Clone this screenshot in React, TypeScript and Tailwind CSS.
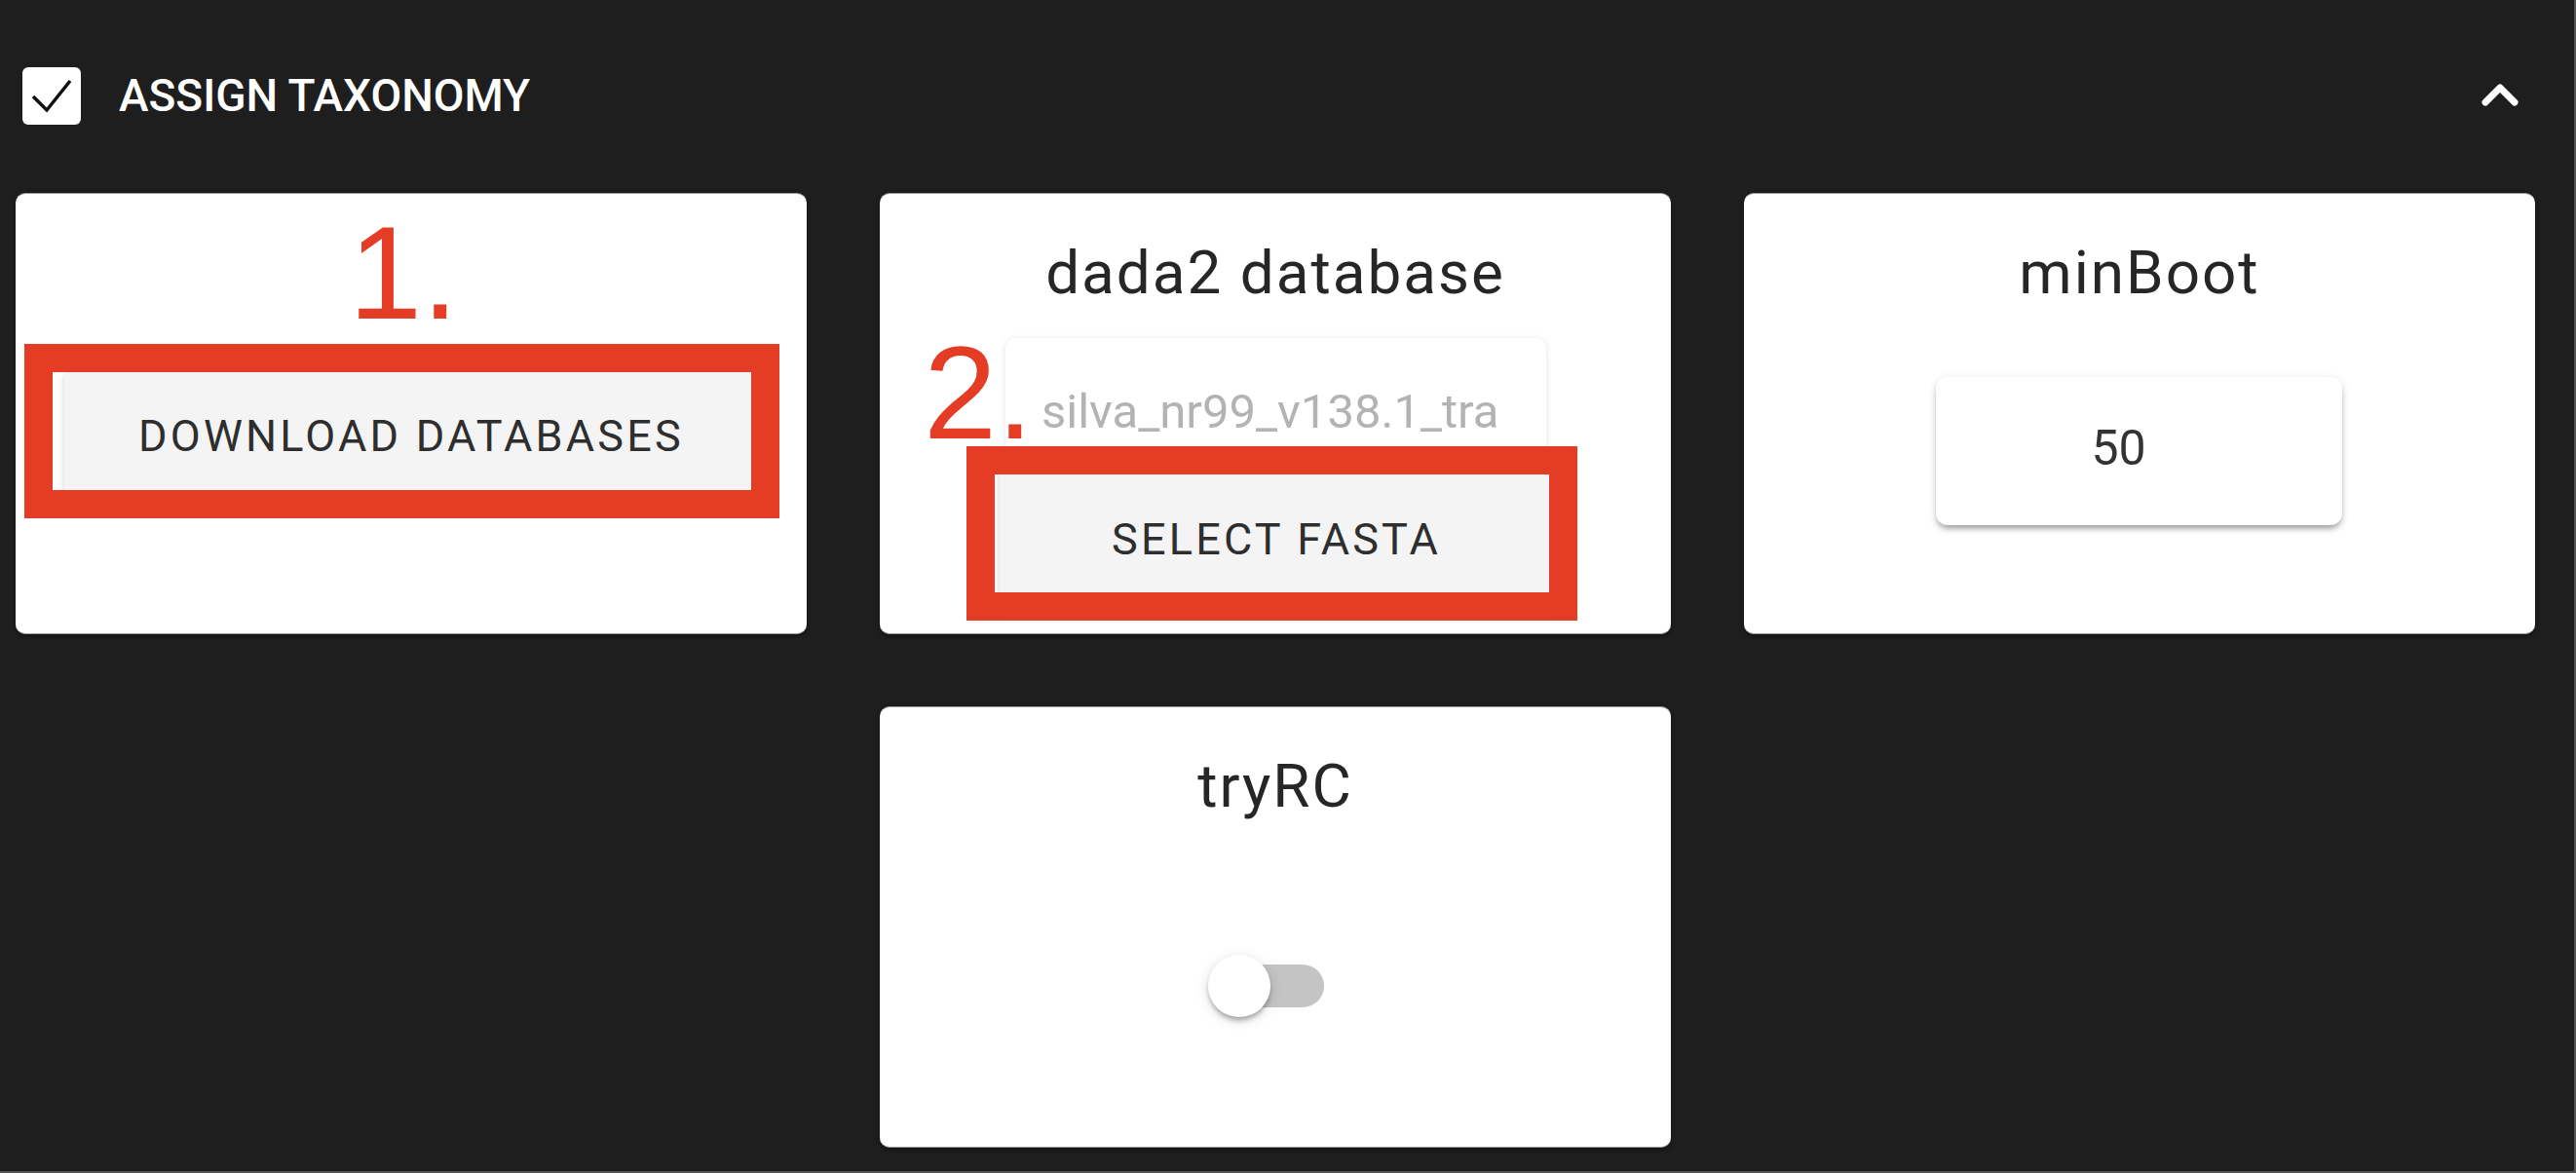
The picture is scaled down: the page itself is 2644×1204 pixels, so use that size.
import React from "react";

function Card({ className = "", children }: { className?: string; children?: React.ReactNode }) {
  return (
    <div
      className={
        "relative h-[453px] bg-white rounded-[10px] border-t border-b border-[#9a9a9a] shadow-[0_2px_4px_rgba(0,0,0,0.4)] " +
        className
      }
    >
      {children}
    </div>
  );
}

function Title({ children }: { children: React.ReactNode }) {
  return (
    <div className="pt-[50px] text-center text-[62px] font-normal leading-none tracking-[2px] text-[#262626]">
      {children}
    </div>
  );
}

function RedBox({ className }: { className: string }) {
  return <div className={"absolute border-[29px] border-[#e43c25] " + className} />;
}

export default function App() {
  return (
    <div className="w-[2644px] h-[1204px] bg-[#1e1e1e] overflow-hidden border-r-2 border-b-2 border-[#555555] font-['Roboto',sans-serif]">
      <header className="h-[196px] flex items-center pl-[23px] pr-[54px]">
        <div className="w-[60px] h-[59px] bg-white rounded-[6px] shrink-0">
          <svg width="60" height="59" viewBox="0 0 60 59">
            <polyline points="11,30 25,44 49,14" fill="none" stroke="#111111" strokeWidth="3.5" />
          </svg>
        </div>
        <span className="ml-[39px] text-white text-[46px] font-medium leading-none">ASSIGN TAXONOMY</span>
        <div className="flex-1" />
        <svg width="44" height="32" viewBox="0 0 44 32" className="shrink-0">
          <polyline
            points="7,23 22,8 37,23"
            fill="none"
            stroke="#ffffff"
            strokeWidth="7"
            strokeLinecap="round"
            strokeLinejoin="round"
          />
        </svg>
      </header>

      <div className="mt-[2px] pl-[16px] grid grid-cols-[812px_812px_812px] grid-rows-[453px_453px] gap-x-[75px] gap-y-[74px]">
        {/* Card 1 */}
        <Card>
          <div className="absolute left-[342px] top-[14px] text-[135px] leading-none text-[#e43c25] font-['Liberation_Sans',Arial,sans-serif]">
            1.
          </div>
          <div className="pt-[181px] pl-[50px]">
            <div className="w-[712px] h-[135px] bg-[#f4f4f4] rounded-[6px] shadow-[0_3px_6px_rgba(0,0,0,0.2)] flex items-center justify-center text-[45px] font-normal leading-none tracking-[3.2px] text-[#2e2e2e]">
              DOWNLOAD DATABASES
            </div>
          </div>
          <RedBox className="left-[9px] top-[154px] w-[775px] h-[179px]" />
        </Card>

        {/* Card 2 */}
        <Card>
          <Title>dada2 database</Title>
          <div className="mt-[36px] ml-[129px] w-[555px] h-[130px] bg-white rounded-[10px] shadow-[0_1px_6px_rgba(0,0,0,0.12)] pt-[51px] pl-[37px]">
            <div className="w-[472px] overflow-hidden whitespace-nowrap text-[49px] leading-none text-[#b3b3b3]">
              silva_nr99_v138.1_train_set.fa.gz
            </div>
          </div>
          <div className="ml-[123px] w-[568px] h-[153px] bg-[#f4f4f4] rounded-[6px] shadow-[0_3px_6px_rgba(0,0,0,0.2)] flex items-center justify-center text-[45px] font-normal leading-none tracking-[3.2px] text-[#2e2e2e]">
            SELECT FASTA
          </div>
          <div className="absolute left-[45px] top-[137px] text-[135px] leading-none text-[#e43c25] font-['Liberation_Sans',Arial,sans-serif]">
            2.
          </div>
          <RedBox className="left-[89px] top-[259px] w-[627px] h-[179px]" />
        </Card>

        {/* Card 3 */}
        <Card>
          <Title>minBoot</Title>
          <div className="mt-[76px] ml-[197px] w-[417px] h-[152px] bg-white rounded-[12px] shadow-[0_5px_6px_-2px_rgba(0,0,0,0.35),0_2px_10px_rgba(0,0,0,0.12)] pt-[48px] pr-[42px] text-center text-[50px] leading-none text-[#333333]">
            50
          </div>
        </Card>

        {/* Card 4 */}
        <Card className="col-start-2">
          <Title>tryRC</Title>
          <div className="relative mt-[142px] ml-[337px] w-[120px] h-[64px]">
            <div className="absolute left-[10px] top-[10px] w-[109px] h-[44px] rounded-full bg-[#c4c4c4]" />
            <div className="absolute left-0 top-0 w-[64px] h-[64px] rounded-full bg-white shadow-[0_6px_6px_-3px_rgba(0,0,0,0.2),0_3px_4px_0_rgba(0,0,0,0.14),0_3px_14px_0_rgba(0,0,0,0.14)]" />
          </div>
        </Card>
      </div>
    </div>
  );
}
